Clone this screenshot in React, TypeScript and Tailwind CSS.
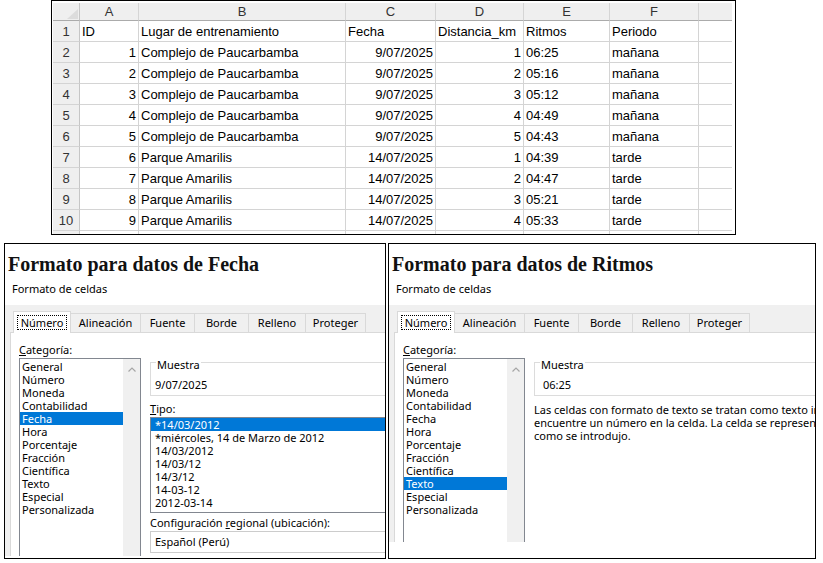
import React from "react";

const rows: (string | number)[][] = [
  ["ID", "Lugar de entrenamiento", "Fecha", "Distancia_km", "Ritmos", "Periodo"],
  [1, "Complejo de Paucarbamba", "9/07/2025", 1, "06:25", "mañana"],
  [2, "Complejo de Paucarbamba", "9/07/2025", 2, "05:16", "mañana"],
  [3, "Complejo de Paucarbamba", "9/07/2025", 3, "05:12", "mañana"],
  [4, "Complejo de Paucarbamba", "9/07/2025", 4, "04:49", "mañana"],
  [5, "Complejo de Paucarbamba", "9/07/2025", 5, "04:43", "mañana"],
  [6, "Parque Amarilis", "14/07/2025", 1, "04:39", "tarde"],
  [7, "Parque Amarilis", "14/07/2025", 2, "04:47", "tarde"],
  [8, "Parque Amarilis", "14/07/2025", 3, "05:21", "tarde"],
  [9, "Parque Amarilis", "14/07/2025", 4, "05:33", "tarde"],
];

const isRight = (r: number, c: number) => r > 0 && (c === 0 || c === 2 || c === 3);

function Sheet() {
  const letters = ["A", "B", "C", "D", "E", "F", ""];
  return (
    <div className="ml-[51px] w-[685px] h-[235px] border border-black pl-[1px] pt-[2px] overflow-hidden bg-white">
      <div
        className="grid grid-cols-[27px_59px_207px_90px_88px_86px_89px_33px] w-[679px] text-[13px] text-black"
        style={{ fontFamily: '"Liberation Sans", Arial, sans-serif' }}
      >
        <div className="h-[18px] bg-[#efefef] border-r border-b border-r-[#c6c6c6] border-b-[#ababab] relative">
          <svg className="absolute right-[1px] bottom-[1px]" width="11" height="10" viewBox="0 0 11 10">
            <polygon points="11,0 11,10 0,10" fill="#dcdcdc" />
          </svg>
        </div>
        {letters.map((l, i) => (
          <div
            key={"h" + i}
            className={
              "h-[18px] bg-[#efefef] border-b border-b-[#ababab] text-center leading-[17px] text-[#333] " +
              (i < 6 ? "border-r border-r-[#d5d5d5]" : "")
            }
          >
            {l}
          </div>
        ))}
        {[...rows, null].map((row, r) => (
          <React.Fragment key={"r" + r}>
            <div className="h-[21px] bg-[#efefef] border-r border-b border-r-[#c6c6c6] border-b-[#d4d4d4] text-center pt-[1px] leading-[19px] text-[#333]">
              {row ? r + 1 : ""}
            </div>
            {[0, 1, 2, 3, 4, 5, 6].map((c) => (
              <div
                key={c}
                className={
                  "h-[21px] border-b border-b-[#d4d4d4] pt-[1px] leading-[19px] whitespace-nowrap overflow-hidden " +
                  (c < 6 ? "border-r border-r-[#d4d4d4] " : "") +
                  (isRight(r, c) ? "text-right pr-[2px]" : "text-left pl-[2px]")
                }
              >
                {row && c < 6 ? row[c] : ""}
              </div>
            ))}
          </React.Fragment>
        ))}
      </div>
    </div>
  );
}

const categories = [
  "General",
  "Número",
  "Moneda",
  "Contabilidad",
  "Fecha",
  "Hora",
  "Porcentaje",
  "Fracción",
  "Científica",
  "Texto",
  "Especial",
  "Personalizada",
];

const tabs: [string, number][] = [
  ["Número", 58],
  ["Alineación", 70],
  ["Fuente", 54],
  ["Borde", 54],
  ["Relleno", 57],
  ["Proteger", 60],
];

function Chevron() {
  return (
    <svg width="8" height="5" viewBox="0 0 8 5">
      <path d="M0.5 4.5 L4 1 L7.5 4.5" stroke="#a6a6a6" strokeWidth="1.2" fill="none" />
    </svg>
  );
}

function Panel({
  title,
  selected,
  width,
  grayH,
  sampleText,
  samplePad,
  children,
}: {
  title: string;
  selected: string;
  width: string;
  grayH: string;
  sampleText: string;
  samplePad: string;
  children: React.ReactNode;
}) {
  return (
    <div
      className={width + " h-[316px] border border-black bg-white flex flex-col overflow-hidden text-[11px] text-black"}
      style={{ fontFamily: '"Noto Sans", "Segoe UI", sans-serif' }}
    >
      <div className="h-[61px] pl-[3px] shrink-0">
        <div
          className="mt-[8px] text-[20px] font-bold leading-[24px] whitespace-nowrap text-[#111]"
          style={{ fontFamily: '"Liberation Serif", "Times New Roman", serif' }}
        >
          {title}
        </div>
        <div className="mt-[5px] ml-[4px] leading-[16px]">Formato de celdas</div>
      </div>
      <div className={grayH + " bg-[#f0f0f0] pl-[5px] pt-[6px] flex flex-col overflow-hidden shrink-0"}>
        <div className="flex items-end h-[21px] ml-[3px] shrink-0">
          {tabs.map(([t, w], i) =>
            i === 0 ? (
              <div
                key={t}
                style={{ width: w }}
                className="h-[22px] -mb-[1px] relative z-10 bg-white border border-b-0 border-[#d9d9d9] flex items-start justify-center pt-[3px]"
              >
                <span className="border border-dotted border-black px-[3px] leading-[13px]">{t}</span>
              </div>
            ) : (
              <div
                key={t}
                style={{ width: w }}
                className="h-[19px] border-t border-r border-[#d9d9d9] bg-[#f0f0f0] text-center leading-[18px]"
              >
                {t}
              </div>
            )
          )}
        </div>
        <div className="flex-1 bg-white border-t border-l border-[#d9d9d9] pl-[8px] pt-[10px] flex">
          <div className="w-[122px] shrink-0">
            <div className="leading-[14px]">
              <span className="underline">C</span>ategoría:
            </div>
            <div className="mt-[1px] h-[220px] border border-[#828790] flex">
              <div className="w-[103px] pt-[1px]">
                {categories.map((c) => (
                  <div
                    key={c}
                    className={
                      "h-[13px] leading-[13px] pl-[2px] " + (c === selected ? "bg-[#0078d7] text-white" : "")
                    }
                  >
                    {c}
                  </div>
                ))}
              </div>
              <div className="w-[17px] bg-[#f0f0f0] flex justify-center pt-[8px]">
                <div>
                  <Chevron />
                </div>
              </div>
            </div>
          </div>
          <div className="ml-[9px] mt-[19px] w-[300px] shrink-0">
            <div className="relative w-[300px] h-[34px] border border-[#dcdcdc]">
              <div className="absolute top-[-5px] left-[5px] px-[1px] bg-white leading-[14px]">Muestra</div>
              <div className={"pt-[15px] leading-[14px] " + samplePad}>{sampleText}</div>
            </div>
            {children}
          </div>
        </div>
      </div>
    </div>
  );
}

const tipos = [
  "*14/03/2012",
  "*miércoles, 14 de Marzo de 2012",
  "14/03/2012",
  "14/03/12",
  "14/3/12",
  "14-03-12",
  "2012-03-14",
];

export default function App() {
  return (
    <div className="w-[823px] h-[563px] bg-white flex flex-col overflow-hidden">
      <Sheet />
      <div className="flex mt-[8px] pl-[4px] gap-[2px]">
        <Panel
          title="Formato para datos de Fecha"
          selected="Fecha"
          width="w-[382px]"
          grayH="h-[251px]"
          sampleText="9/07/2025"
          samplePad="pl-[4px]"
        >
          <div className="mt-[6px] leading-[14px]">
            <span className="underline">T</span>ipo:
          </div>
          <div className="mt-[1px] w-[300px] h-[96px] border border-[#828790]">
            {tipos.map((t, i) => (
              <div
                key={t}
                className={"h-[13px] leading-[13px] pl-[4px] " + (i === 0 ? "bg-[#0078d7] text-white" : "")}
              >
                {t}
              </div>
            ))}
          </div>
          <div className="mt-[3px] leading-[14px] whitespace-nowrap">
            Configuración <span className="underline">r</span>egional (ubicación):
          </div>
          <div className="mt-[1px] w-[300px] h-[22px] border border-[#cccccc] pl-[4px] leading-[20px]">
            Español (Perú)
          </div>
        </Panel>
        <Panel
          title="Formato para datos de Ritmos"
          selected="Texto"
          width="w-[428px]"
          grayH="h-[237px]"
          sampleText="06:25"
          samplePad="pl-[8px]"
        >
          <div className="mt-[7px] leading-[13px] whitespace-nowrap">
            <div>Las celdas con formato de texto se tratan como texto incluso cuando se</div>
            <div>encuentre un número en la celda. La celda se representará exactamente</div>
            <div>como se introdujo.</div>
          </div>
        </Panel>
      </div>
    </div>
  );
}
